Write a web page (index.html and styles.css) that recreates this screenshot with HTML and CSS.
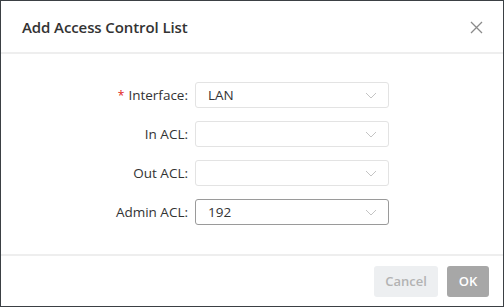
FILE: index.html
```html
<!DOCTYPE html>
<html>
<head>
<meta charset="utf-8">
<link rel="stylesheet" href="styles.css">
</head>
<body>
<div class="dialog">
  <div class="header">
    <div class="title">Add Access Control List</div>
    <svg class="close" width="13" height="13" viewBox="0 0 13 13"><path d="M1 1L12 12M12 1L1 12" stroke="#8a8a8a" stroke-width="1.3" fill="none"/></svg>
  </div>
  <div class="body">
    <div class="row">
      <div class="label"><span class="req">*</span>Interface:</div>
      <div class="select"><span class="val">LAN</span><svg class="chev" width="12" height="7" viewBox="0 0 12 7"><path d="M1 1L6 6L11 1" stroke="#c4c4c4" stroke-width="1" fill="none"/></svg></div>
    </div>
    <div class="row">
      <div class="label">In ACL:</div>
      <div class="select"><span class="val"></span><svg class="chev" width="12" height="7" viewBox="0 0 12 7"><path d="M1 1L6 6L11 1" stroke="#c4c4c4" stroke-width="1" fill="none"/></svg></div>
    </div>
    <div class="row">
      <div class="label">Out ACL:</div>
      <div class="select"><span class="val"></span><svg class="chev" width="12" height="7" viewBox="0 0 12 7"><path d="M1 1L6 6L11 1" stroke="#c4c4c4" stroke-width="1" fill="none"/></svg></div>
    </div>
    <div class="row">
      <div class="label">Admin ACL:</div>
      <div class="select active"><span class="val">192</span><svg class="chev" width="12" height="7" viewBox="0 0 12 7"><path d="M1 1L6 6L11 1" stroke="#c4c4c4" stroke-width="1" fill="none"/></svg></div>
    </div>
  </div>
  <div class="footer">
    <button class="btn cancel">Cancel</button>
    <button class="btn ok">OK</button>
  </div>
</div>
</body>
</html>
```
FILE: styles.css
```css
html, body { margin: 0; padding: 0; background: #fff; }
body { font-family: "Open Sans", "Noto Sans", sans-serif; color: #333; }
.dialog {
  width: 504px; height: 307px; box-sizing: border-box;
  border: 1px solid #3b4044;
  display: flex; flex-direction: column;
}
.header {
  height: 53px; box-sizing: border-box;
  border-bottom: 2px solid #eeeeee;
  display: flex; align-items: center; justify-content: space-between;
  padding: 0 20px 0 21px;
}
.title { font-size: 15px; font-weight: 600; color: #333; letter-spacing: -0.1px; }
.close { margin-top: 1px; }
.body {
  flex: 1; display: flex; flex-direction: column; gap: 13px;
  padding-top: 28px; box-sizing: border-box;
}
.row { display: flex; align-items: center; height: 26px; }
.label {
  width: 194px; text-align: right; font-size: 13.5px; color: #333; padding-right: 7px; box-sizing: border-box;
}
.req { color: #e02020; margin-right: 4px; font-size: 12px; }
.select {
  width: 194px; height: 26px; box-sizing: border-box;
  border: 1px solid #e3e3e3; border-radius: 3px;
  display: flex; align-items: center; justify-content: space-between;
  padding: 0 11px 0 12px;
}
.select.active { border-color: #9a9a9a; }
.val { font-size: 13.5px; color: #333; }
.footer {
  height: 52px; box-sizing: border-box;
  border-top: 2px solid #eeeeee;
  display: flex; align-items: center; justify-content: flex-end;
  gap: 9px; padding: 0 14px 0 0;
}
.btn {
  height: 31px; border: none; border-radius: 3px; font-family: "Open Sans", sans-serif;
  font-size: 13px; font-weight: 600; padding: 0;
}
.cancel { width: 64px; background: #edeff1; color: #b3b3b3; }
.ok { width: 42px; background: #a7a7a7; color: #fff; }
```
